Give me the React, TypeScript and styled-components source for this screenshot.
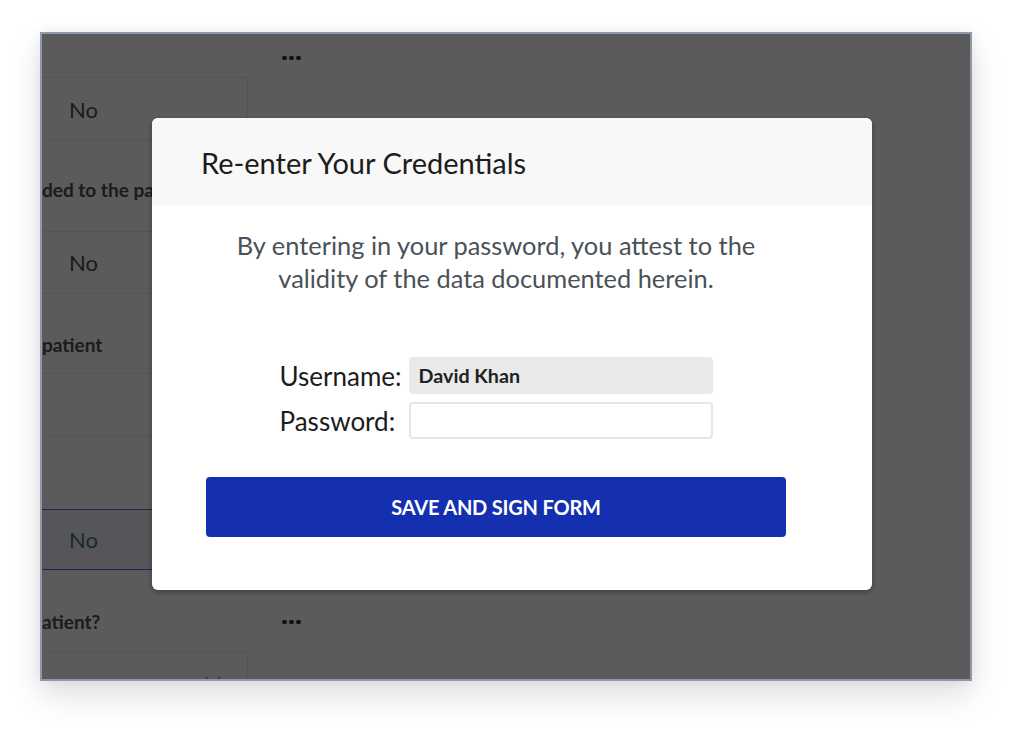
import React from "react";
import styled, { createGlobalStyle } from "styled-components";
import { ChevronDown } from "lucide-react";

const GlobalStyle = createGlobalStyle`
  html, body {
    margin: 0;
    padding: 0;
    background: #ffffff;
    font-family: Lato, "Open Sans", sans-serif;
  }
  * {
    box-sizing: border-box;
  }
`;

const Page = styled.div`
  width: 1012px;
  height: 730px;
  padding: 32px 0 0 40px;
`;

const Window = styled.div`
  position: relative;
  width: 932px;
  height: 649px;
  border: 2px solid #8e9aab;
  background: #ffffff;
  overflow: hidden;
  box-shadow: 0 14px 30px rgba(0, 0, 0, 0.13), 0 0 12px rgba(0, 0, 0, 0.06);
`;

/* form that sits behind the dialog */
const Form = styled.div`
  display: flex;
  flex-direction: column;
`;

const QuestionHead = styled.div<{ $h: number; $top: number }>`
  display: flex;
  align-items: flex-start;
  height: ${(p) => p.$h}px;
  padding-top: ${(p) => p.$top}px;
`;

const QuestionLabel = styled.div`
  width: 240px;
  font-size: 19px;
  line-height: 20px;
  font-weight: 700;
  color: #4d4d4d;
  white-space: nowrap;
`;

const Dots = styled.div`
  display: flex;
  gap: 2.5px;
  height: 20px;
  align-items: center;
  span {
    width: 4.5px;
    height: 4.5px;
    border-radius: 50%;
    background: #2e2e2e;
  }
`;

const Cell = styled.div<{ $h: number; $selected?: boolean }>`
  position: relative;
  display: flex;
  align-items: center;
  width: 226px;
  height: ${(p) => p.$h}px;
  margin-left: -20px;
  margin-top: -1px;
  padding-left: 46px;
  padding-right: 20px;
  border: 1px solid ${(p) => (p.$selected ? "#5465ee" : "#ebebeb")};
  background: ${(p) => (p.$selected ? "#f0f2fb" : "#ffffff")};
  color: ${(p) => (p.$selected ? "#4c7865" : "#4c4c4c")};
  font-size: 22px;
  z-index: ${(p) => (p.$selected ? 1 : 0)};
  &:first-child {
    margin-top: 0;
  }
`;

const CellGroup = styled.div`
  display: flex;
  flex-direction: column;
`;

const SelectCell = styled(Cell)`
  justify-content: flex-end;
  align-items: flex-start;
  padding-top: 14px;
  color: #aaaaaa;
`;

/* dialog */
const Overlay = styled.div`
  position: absolute;
  inset: 0;
  z-index: 5;
  background: rgba(0, 0, 0, 0.643);
  display: flex;
  align-items: flex-start;
  padding: 84px 0 0 110px;
`;

const Modal = styled.div`
  width: 720px;
  height: 472px;
  background: #ffffff;
  border-radius: 6px;
  overflow: hidden;
  box-shadow: 0 2px 5px rgba(0, 0, 0, 0.3);
`;

const ModalHeader = styled.div`
  height: 88px;
  display: flex;
  align-items: center;
  padding-left: 49px;
  background: #f8f8f8;
`;

const ModalTitle = styled.h2`
  margin: 0;
  font-size: 29px;
  font-weight: 400;
  color: #1c1c1c;
`;

const ModalBody = styled.div`
  display: flex;
  flex-direction: column;
  align-items: center;
  padding: 23px 86px 0 54px;
`;

const Attest = styled.p`
  margin: 0;
  width: 580px;
  text-align: center;
  font-size: 25.4px;
  line-height: 33px;
  color: #4a5157;
`;

const Fields = styled.div`
  display: grid;
  grid-template-columns: auto 304px;
  column-gap: 7px;
  row-gap: 8px;
  align-items: center;
  margin-top: 62px;
`;

const FieldLabel = styled.label`
  font-size: 26px;
  color: #1c1c1c;
`;

const TextInput = styled.input<{ $readOnly?: boolean }>`
  height: 37px;
  width: 304px;
  padding: 0 8px;
  border-radius: 4px;
  border: 2px solid ${(p) => (p.$readOnly ? "#e9e9e9" : "#e6e6e6")};
  background: ${(p) => (p.$readOnly ? "#e9e9e9" : "#ffffff")};
  font-family: Lato, sans-serif;
  font-size: 19.7px;
  font-weight: 700;
  color: #222222;
  outline: none;
`;

const SignButton = styled.button`
  margin-top: 38px;
  width: 580px;
  height: 60px;
  border: none;
  border-radius: 4px;
  background: #1430b0;
  color: #ffffff;
  font-family: Lato, sans-serif;
  font-size: 20px;
  font-weight: 700;
  letter-spacing: -0.2px;
  cursor: pointer;
`;

const DotsIcon = () => (
  <Dots>
    <span />
    <span />
    <span />
  </Dots>
);

const App = () => {
  return (
    <Page>
      <GlobalStyle />
      <Window>
        <Form>
          <QuestionHead $h={43} $top={14}>
            <QuestionLabel />
            <DotsIcon />
          </QuestionHead>
          <CellGroup>
            <Cell $h={64}>No</Cell>
          </CellGroup>

          <QuestionHead $h={90} $top={39}>
            <QuestionLabel>ded to the patient</QuestionLabel>
          </QuestionHead>
          <CellGroup>
            <Cell $h={63}>No</Cell>
          </CellGroup>

          <QuestionHead $h={79} $top={41}>
            <QuestionLabel>patient</QuestionLabel>
          </QuestionHead>
          <CellGroup>
            <Cell $h={63} />
            <Cell $h={75} />
            <Cell $h={61} $selected>
              No
            </Cell>
          </CellGroup>

          <QuestionHead $h={82} $top={42}>
            <QuestionLabel>atient?</QuestionLabel>
            <DotsIcon />
          </QuestionHead>
          <CellGroup>
            <SelectCell $h={60}>
              <ChevronDown size={28} strokeWidth={1.6} />
            </SelectCell>
          </CellGroup>
        </Form>

        <Overlay>
          <Modal>
            <ModalHeader>
              <ModalTitle>Re-enter Your Credentials</ModalTitle>
            </ModalHeader>
            <ModalBody>
              <Attest>
                By entering in your password, you attest to the
                <br />
                validity of the data documented herein.
              </Attest>
              <Fields>
                <FieldLabel htmlFor="username">Username:</FieldLabel>
                <TextInput id="username" $readOnly readOnly value="David Khan" />
                <FieldLabel htmlFor="password">Password:</FieldLabel>
                <TextInput id="password" type="password" />
              </Fields>
              <SignButton>SAVE AND SIGN FORM</SignButton>
            </ModalBody>
          </Modal>
        </Overlay>
      </Window>
    </Page>
  );
};

export default App;
